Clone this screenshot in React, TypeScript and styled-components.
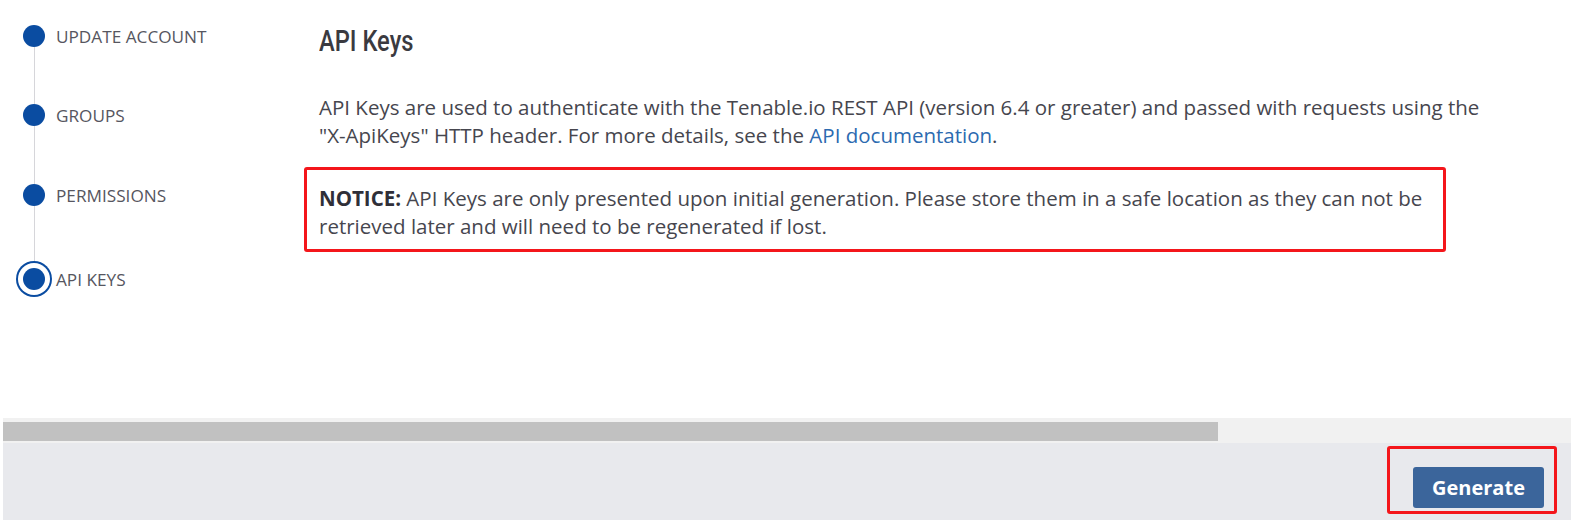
import React from "react";
import styled, { createGlobalStyle } from "styled-components";

const GlobalStyle = createGlobalStyle`
  html, body { margin: 0; padding: 0; background: #ffffff; }
  body { font-family: "Open Sans", "Noto Sans", sans-serif; }
  * { box-sizing: border-box; }
`;

const Page = styled.div`
  width: 1571px;
  height: 528px;
  display: flex;
  flex-direction: column;
  overflow: hidden;
`;

const Top = styled.div`
  height: 418px;
  display: flex;
`;

const Sidebar = styled.nav`
  width: 304px;
  flex-shrink: 0;
  padding: 25px 0 0 23px;
  display: flex;
  flex-direction: column;
`;

const StepRow = styled.div`
  display: flex;
  align-items: center;
  height: 22px;
  gap: 11px;
`;

const Dot = styled.span<{ $active?: boolean }>`
  flex-shrink: 0;
  width: 22px;
  height: 22px;
  border-radius: 50%;
  background: #0a4ca1;
  box-shadow: ${(p) =>
    p.$active ? "0 0 0 5px #ffffff, 0 0 0 7px #0a4ca1" : "none"};
`;

const StepLabel = styled.span`
  font-size: 17.2px;
  color: #565660;
  white-space: nowrap;
`;

const Connector = styled.div<{ $h: number }>`
  width: 1px;
  height: ${(p) => p.$h}px;
  margin-left: 10.5px;
  background: #d6d6da;
`;

const Main = styled.main`
  flex: 1;
  padding: 24px 40px 0 15px;
`;

const Heading = styled.h1`
  margin: 0;
  display: inline-block;
  font-family: "Roboto", "Open Sans", sans-serif;
  font-weight: 500;
  font-size: 30px;
  line-height: 34px;
  color: #3a3a40;
  transform: scaleX(0.79);
  transform-origin: left center;
`;

const Paragraph = styled.p`
  margin: 35px 0 0 0;
  font-size: 20.5px;
  line-height: 28px;
  color: #46464e;
`;

const NoWrap = styled.span`
  white-space: nowrap;
`;

const Link = styled.a`
  color: #2c6ab0;
  text-decoration: none;
`;

const Notice = styled.div`
  margin: 18px 0 0 -15px;
  width: 1142px;
  border: 3px solid #f4161b;
  border-radius: 3px;
  padding: 14px 12px 9px 12px;
  font-size: 20.5px;
  line-height: 28px;
  color: #46464e;
`;

const Strong = styled.strong`
  font-weight: 700;
  color: #2f2f38;
`;

const ScrollTrack = styled.div`
  margin-left: 3px;
  height: 25px;
  background: #f1f1f1;
  padding: 4px 0 2px 0;
  display: flex;
`;

const ScrollThumb = styled.div<{ $w: number }>`
  width: ${(p) => p.$w}px;
  background: #c1c1c1;
`;

const Footer = styled.footer`
  margin-left: 3px;
  height: 77px;
  background: #e8e9ed;
  display: flex;
  justify-content: flex-end;
  align-items: flex-start;
  padding: 3px 14px 0 0;
`;

const Highlight = styled.div`
  border: 3px solid #f4161b;
  border-radius: 3px;
  padding: 18px 10px 3px 23px;
`;

const Button = styled.button`
  width: 131px;
  height: 41px;
  border: none;
  border-radius: 3px;
  background: #3b659b;
  color: #ffffff;
  font-family: "Open Sans", "Noto Sans", sans-serif;
  font-weight: 700;
  font-size: 20px;
  cursor: pointer;
`;

const steps = [
  { label: "UPDATE ACCOUNT", gap: 0 },
  { label: "GROUPS", gap: 57 },
  { label: "PERMISSIONS", gap: 58 },
  { label: "API KEYS", gap: 62, active: true },
];

export default function App() {
  return (
    <>
      <GlobalStyle />
      <Page>
        <Top>
          <Sidebar>
            {steps.map((s, i) => (
              <React.Fragment key={s.label}>
                {i > 0 && <Connector $h={s.gap} />}
                <StepRow>
                  <Dot $active={s.active} />
                  <StepLabel>{s.label}</StepLabel>
                </StepRow>
              </React.Fragment>
            ))}
          </Sidebar>
          <Main>
            <Heading>API Keys</Heading>
            <Paragraph>
              API Keys are used to authenticate with the Tenable.io REST API (version 6.4 or greater) and passed with requests using the{" "}
              <NoWrap>"X-ApiKeys"</NoWrap> HTTP header. For more details, see the{" "}
              <Link href="#">API documentation</Link>.
            </Paragraph>
            <Notice>
              <Strong>NOTICE:</Strong> API Keys are only presented upon initial generation. Please store them in a safe location as they can not be retrieved later and will need to be regenerated if lost.
            </Notice>
          </Main>
        </Top>
        <ScrollTrack>
          <ScrollThumb $w={1215} />
        </ScrollTrack>
        <Footer>
          <Highlight>
            <Button>Generate</Button>
          </Highlight>
        </Footer>
      </Page>
    </>
  );
}
